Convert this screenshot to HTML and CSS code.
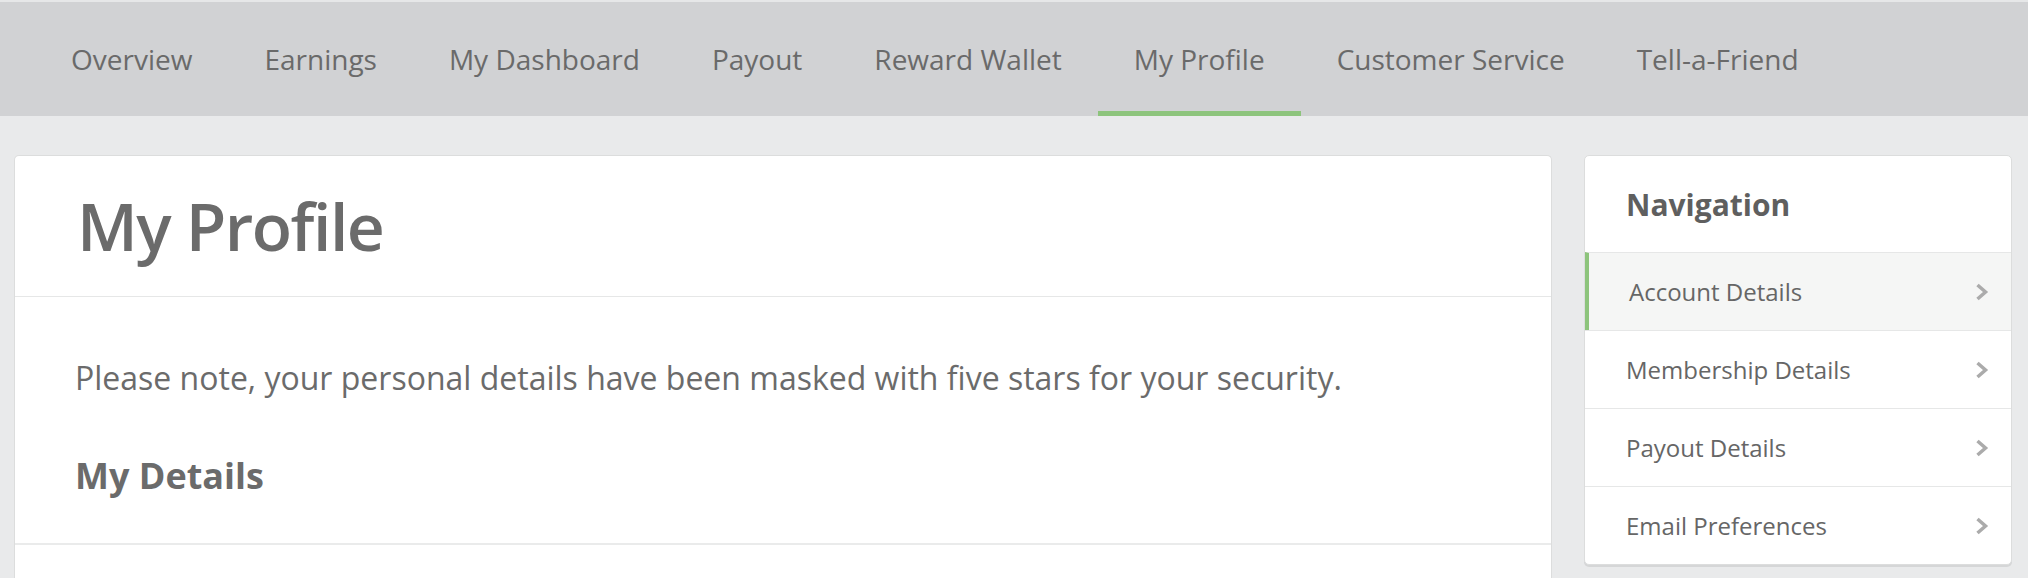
FILE: index.html
```html
<!DOCTYPE html>
<html lang="en">
<head>
    <meta charset="UTF-8">
    <meta name="viewport" content="width=device-width, initial-scale=1.0">
    <title>My Profile</title>
    <link rel="stylesheet" href="styles.css">
</head>
<body>
    <!-- top menu -->
    <nav class="top-nav">
        <a class="top-link" href="#">Overview</a>
        <a class="top-link" href="#">Earnings</a>
        <a class="top-link" href="#">My Dashboard</a>
        <a class="top-link" href="#">Payout</a>
        <a class="top-link" href="#">Reward Wallet</a>
        <a class="top-link active" href="#">My Profile</a>
        <a class="top-link" href="#">Customer Service</a>
        <a class="top-link" href="#">Tell-a-Friend</a>
    </nav>

    <div class="page">
        <!-- main content -->
        <section class="card main-card">
            <div class="card-head">
                <h1 class="page-title">My Profile</h1>
            </div>
            <div class="card-body">
                <p class="note">Please note, your personal details have been masked with five stars for your security.</p>
                <h2 class="section-title">My Details</h2>
            </div>
        </section>

        <!-- side navigation -->
        <aside class="card side-card">
            <h3 class="side-title">Navigation</h3>
            <a class="side-link active" href="#">
                <span>Account Details</span>
                <svg class="chev" viewBox="0 0 15 20"><path d="M3.5 3 L11.5 10 L3.5 17" /></svg>
            </a>
            <a class="side-link" href="#">
                <span>Membership Details</span>
                <svg class="chev" viewBox="0 0 15 20"><path d="M3.5 3 L11.5 10 L3.5 17" /></svg>
            </a>
            <a class="side-link" href="#">
                <span>Payout Details</span>
                <svg class="chev" viewBox="0 0 15 20"><path d="M3.5 3 L11.5 10 L3.5 17" /></svg>
            </a>
            <a class="side-link" href="#">
                <span>Email Preferences</span>
                <svg class="chev" viewBox="0 0 15 20"><path d="M3.5 3 L11.5 10 L3.5 17" /></svg>
            </a>
        </aside>
    </div>
</body>
</html>
```

FILE: styles.css
```css
body {
    margin: 0;
    background-color: #e9eaeb;
    font-family: "Open Sans", "Liberation Sans", sans-serif;
    color: #6b6b6b;
}

/* top menu */
.top-nav {
    display: flex;
    height: 114px;
    padding-left: 35px;
    border-top: 2px solid #e6e7e8;
    background-color: #d1d2d4;
}
.top-link {
    padding: 0 36px;
    line-height: 114px;
    font-size: 28px;
    color: #6a6a6a;
    text-decoration: none;
}
.top-link.active {
    box-shadow: inset 0 -5px 0 #8dc47c;
}

/* layout */
.page {
    display: grid;
    grid-template-columns: 1fr 428px;
    gap: 32px;
    padding: 39px 16px 0 14px;
    align-items: start;
}
.card {
    background-color: #fff;
    border: 1px solid #dcdddd;
    border-radius: 5px;
}

/* main card */
.main-card {
    min-height: 440px;
    border-bottom: none;
    border-radius: 5px 5px 0 0;
}
.card-head {
    padding: 29px 61px 31px 62px;
    border-bottom: 1px solid #e6e7e7;
}
.page-title {
    margin: 0;
    font-size: 66px;
    line-height: 80px;
    font-weight: 600;
    letter-spacing: -1.5px;
    color: #6b6b6b;
}
.card-body {
    padding: 59px 61px 43px 60px;
    border-bottom: 2px solid #eaebeb;
}
.note {
    margin: 0 0 52px;
    font-size: 32px;
    line-height: 44px;
}
.section-title {
    margin: 0;
    font-size: 36px;
    line-height: 48px;
    font-weight: 700;
    color: #6b6b6b;
}

/* side navigation */
.side-card {
    box-shadow: 0 2px 0 #d5d6d7;
}
.side-title {
    margin: 0;
    padding: 29px 41px 27px;
    font-size: 30px;
    line-height: 40px;
    font-weight: 700;
    color: #5f5f5f;
}
.side-link {
    display: flex;
    justify-content: space-between;
    align-items: center;
    height: 77px;
    padding: 0 22px 0 41px;
    border-top: 1px solid #e6e7e7;
    font-size: 24px;
    color: #666;
    text-decoration: none;
}
.side-link.active {
    padding-left: 40px;
    border-left: 4px solid #8dc47c;
    background-color: #f5f6f5;
}
.chev {
    width: 15px;
    height: 20px;
    fill: none;
    stroke: #ababab;
    stroke-width: 3.5;
}
```
